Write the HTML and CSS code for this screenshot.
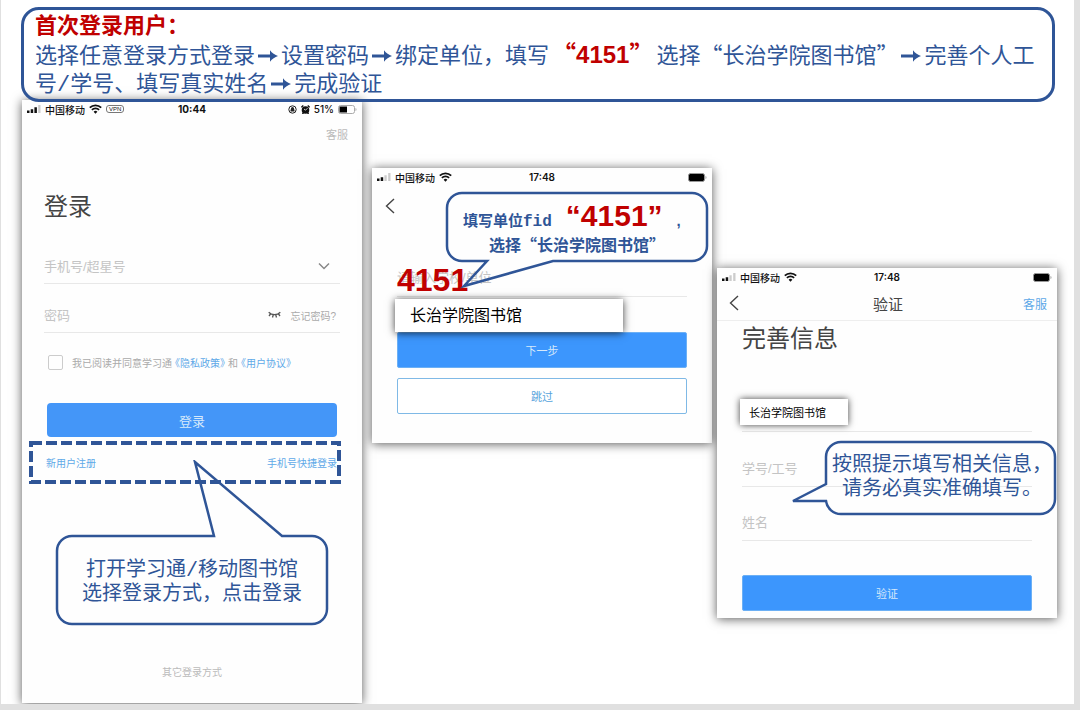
FILE: index.html
```html
<!DOCTYPE html>
<html lang="zh-CN">
<head>
<meta charset="utf-8">
<title>首次登录用户</title>
<link rel="stylesheet" href="styles.css">
</head>
<body>
<svg class="defs" aria-hidden="true">
  <symbol id="wifi" viewBox="0 0 13 10"><path d="M.8 3.6a8.2 8.2 0 0 1 11.4 0M2.9 5.9a5.1 5.1 0 0 1 7.2 0" fill="none" stroke="currentColor" stroke-width="1.8"/><path d="M4.6 7.7a2.8 2.8 0 0 1 3.8 0L6.5 9.8z" fill="currentColor"/></symbol>
  <symbol id="arrow" viewBox="0 0 20 14"><path d="M0 5.500h13v3H0z" fill="currentColor"/><path d="M12 1.200C14 4 17 6 20 7c-3 1-6 3-8 5.800z" fill="currentColor"/></symbol>
  <symbol id="back" viewBox="0 0 10 16"><path d="M9 1 1.500 8 9 15" fill="none" stroke="currentColor" stroke-width="1.400"/></symbol>
</svg>
<main class="slide">
  <header class="banner">
    <h1 class="banner-title">首次登录用户：</h1>
    <p class="banner-text">选择任意登录方式登录<svg class="arrow"><use href="#arrow"/></svg>设置密码<svg class="arrow"><use href="#arrow"/></svg>绑定单位，填写<strong class="code"><span class="quote">“</span>4151<span class="quote">”</span></strong>选择<span class="quote">“长治学院图书馆”</span><svg class="arrow"><use href="#arrow"/></svg>完善个人工<br>号<span class="slash">/</span>学号、填写真实姓名<svg class="arrow"><use href="#arrow"/></svg>完成验证</p>
  </header>

  <div class="phones">
    <section class="phone phone-login">
      <div class="status status-bold">
        <div class="status-left">
          <svg class="signal" viewBox="0 0 14 8"><path d="M0 5.500h2.500V8H0zM3.700 4.200h2.500V8H3.700zM7.400 2.200h2.500V8H7.400z" fill="#111"/><path d="M11.200 0h2.300v8h-2.300z" fill="#ccc"/></svg>
          <span>中国移动</span>
          <svg class="wifi"><use href="#wifi"/></svg>
          <span class="vpn">VPN</span>
        </div>
        <time>10:44</time>
        <div class="status-right">
          <svg class="glyph" viewBox="0 0 9 9"><circle cx="4.500" cy="4.500" r="3.700" fill="none" stroke="#222"/><path d="M3 5V3.500a1.500 1.500 0 0 1 3 0V5M2.500 4.600h4v2h-4z" fill="#222"/></svg>
          <svg class="glyph" viewBox="0 0 9 9"><circle cx="4.500" cy="5" r="3.800" fill="#111"/><path d="M.3 2.300 2.300.5M8.700 2.300 6.700.5M1.500 9l1-1.500M7.500 9l-1-1.500" stroke="#111" stroke-width="1.400"/><path d="M4.500 5.200 6.500 3.200M3 4l1.500 1.200" stroke="#fff" stroke-width=".8"/></svg>
          <span>51%</span>
          <svg class="battery" viewBox="0 0 19 9"><rect x=".5" y=".5" width="16" height="8" rx="2" fill="none" stroke="#aaa"/><rect x="1.500" y="1.500" width="7.500" height="6" fill="#000"/><path d="M17.500 3c1.300.5 1.300 2.500 0 3z" fill="#aaa"/></svg>
        </div>
      </div>
      <div class="body">
        <a class="service" href="#">客服</a>
        <h2 class="heading login-heading">登录</h2>
        <div class="field field-account">
          <input class="input" type="text" placeholder="手机号/超星号" aria-label="手机号/超星号">
          <svg class="chevron" viewBox="0 0 12 8"><path d="m1 1.500 5 5 5-5" fill="none" stroke="#888" stroke-width="1.500"/></svg>
        </div>
        <div class="field field-password">
          <input class="input" type="password" placeholder="密码" aria-label="密码">
          <svg class="eye" viewBox="0 0 13 8"><path d="M.7 1.300c3 3.200 8.600 3.200 11.600 0M2.500 3 1 5M5.200 4 4.500 6.500M7.800 4l.7 2.500M10.500 3 12 5" fill="none" stroke="#555" stroke-width="1.300"/></svg>
          <a class="forgot" href="#">忘记密码?</a>
        </div>
        <div class="agree">
          <input class="check" type="checkbox" id="agree">
          <label for="agree">我已阅读并同意学习通<a href="#">《隐私政策》</a>和<a href="#">《用户协议》</a></label>
        </div>
        <button class="button login-button" type="button">登录</button>
        <nav class="links">
          <svg class="dashes" aria-hidden="true"><rect x="2" y="2"/></svg>
          <a href="#">新用户注册</a>
          <a href="#">手机号快捷登录</a>
        </nav>
        <p class="other">其它登录方式</p>
      </div>
      <aside class="callout callout-login">
        <svg class="bubble" viewBox="0 0 276 166"><path d="M18 76H160L141 2 228 76H258a15 15 0 0 1 15 15V149a15 15 0 0 1-15 15H18A15 15 0 0 1 3 149V91A15 15 0 0 1 18 76z"/></svg>
        <p>打开学习通<span class="slash">/</span>移动图书馆<br>选择登录方式，点击登录</p>
      </aside>
    </section>

    <section class="phone phone-unit">
      <div class="status">
        <div class="status-left">
          <svg class="signal" viewBox="0 0 14 8"><path d="M0 5.500h2.500V8H0zM3.700 4.200h2.500V8H3.700z" fill="#111"/><path d="M7.400 2.200h2.300V8H7.400zM11.200 0h2.300v8h-2.300z" fill="#ccc"/></svg>
          <span>中国移动</span>
          <svg class="wifi"><use href="#wifi"/></svg>
        </div>
        <time>17:48</time>
        <svg class="battery" viewBox="0 0 19 9"><rect x=".5" y=".5" width="16" height="8" rx="2" fill="#000" stroke="#999"/><path d="M17.500 3c1.300.5 1.300 2.500 0 3z" fill="#999"/></svg>
      </div>
      <div class="unit-nav">
        <button class="back" type="button" aria-label="返回"><svg viewBox="0 0 10 16"><use href="#back"/></svg></button>
      </div>
      <div class="body">
        <div class="field field-unit">
          <input class="input" type="text" placeholder="请输入学校/单位" aria-label="学校/单位">
        </div>
        <button class="button next-button" type="button">下一步</button>
        <button class="button outline" type="button">跳过</button>
      </div>
      <div class="suggestion">长治学院图书馆</div>
      <div class="typed">4151</div>
      <aside class="callout callout-unit">
        <svg class="bubble" viewBox="0 0 266 100"><path d="M43 71H18A15 15 0 0 1 3 56V18A15 15 0 0 1 18 3H248a15 15 0 0 1 15 15V56a15 15 0 0 1-15 15H109L20 96z"/></svg>
        <p class="line"><span>填写单位<span class="mono">fid</span></span><strong>“4151”</strong><span>,</span></p>
        <p>选择<span class="quote">“长治学院图书馆”</span></p>
      </aside>
    </section>

    <section class="phone phone-verify">
      <div class="status">
        <div class="status-left">
          <svg class="signal" viewBox="0 0 14 8"><path d="M0 5.500h2.500V8H0zM3.700 4.200h2.500V8H3.700z" fill="#111"/><path d="M7.400 2.200h2.300V8H7.400zM11.200 0h2.300v8h-2.300z" fill="#ccc"/></svg>
          <span>中国移动</span>
          <svg class="wifi"><use href="#wifi"/></svg>
        </div>
        <time>17:48</time>
        <svg class="battery" viewBox="0 0 19 9"><rect x=".5" y=".5" width="16" height="8" rx="2" fill="#000" stroke="#999"/><path d="M17.500 3c1.300.5 1.300 2.500 0 3z" fill="#999"/></svg>
      </div>
      <div class="verify-nav">
        <button class="back" type="button" aria-label="返回"><svg viewBox="0 0 10 16"><use href="#back"/></svg></button>
        <span class="nav-title">验证</span>
        <a href="#">客服</a>
      </div>
      <div class="body">
        <h2 class="heading">完善信息</h2>
        <div class="field field-school"><input class="school" type="text" value="长治学院图书馆" aria-label="学校"></div>
        <div class="field field-number"><input class="input" type="text" placeholder="学号/工号" aria-label="学号/工号"></div>
        <div class="field field-name"><input class="input" type="text" placeholder="姓名" aria-label="姓名"></div>
        <button class="button verify-button" type="button">验证</button>
      </div>
      <aside class="callout callout-verify">
        <svg class="bubble" viewBox="0 0 270 78"><path d="M37 45V18A15 15 0 0 1 52 3H251a15 15 0 0 1 15 15V60a15 15 0 0 1-15 15H52A15 15 0 0 1 37 62L4 62z"/></svg>
        <p>按照提示填写相关信息，<br>请务必真实准确填写。</p>
      </aside>
    </section>
  </div>
</main>
</body>
</html>
```
FILE: styles.css
```css
* { box-sizing: border-box; margin: 0; }

body {
  background: #e0e0e0;
  padding: 0 6px 7px 1px;
  font-family: "Liberation Sans", "Noto Sans CJK SC", sans-serif;
  color: #444;
}

a { color: #5fa9e8; text-decoration: none; }
input, button { font-family: inherit; }
svg { flex: none; }
.defs { position: absolute; width: 0; height: 0; }

.slide {
  background: #fff;
  padding: 7px 17px 1px 21px;
  overflow: hidden;
}

.banner {
  position: relative;
  z-index: 2;
  margin: 0 2px -2px -1px;
  padding: 1px 10px 1px 11px;
  border: 3px solid #2f5597;
  border-radius: 18px;
  color: #2f5597;
}
.banner-title { font-size: 22px; line-height: 30px; color: #c00000; }
.banner-text { font-size: 22px; line-height: 28px; white-space: nowrap; }
.arrow { width: 20px; height: 14px; margin: 0 3px; }
.code { margin: 0 3px; font-size: 24px; line-height: 24px; color: #c00000; }
.quote { font-family: "Noto Sans CJK SC", sans-serif; line-height: 1; }
.slash { font-family: "Liberation Mono", monospace; line-height: 1; }

.phones { display: flex; align-items: flex-start; }
.phone {
  position: relative;
  flex: 1;
  background: #fefefe;
  box-shadow: 0 1px 10px rgba(0, 0, 0, .65);
}
.phone-unit { margin: 68px 0 0 10px; padding-bottom: 29px; }
.phone-verify { margin: 168px 0 0 5px; padding-bottom: 7px; }
.phone-login { padding-bottom: 22px; }

.status {
  display: grid;
  grid-template-columns: 1fr auto 1fr;
  align-items: center;
  height: 18px;
  padding: 0 5px;
  font-size: 10px;
  font-weight: 500;
  color: #111;
}
.status time { font-family: Inter, sans-serif; font-size: 10px; font-weight: 600; }
.status-left, .status-right { display: flex; align-items: center; gap: 4px; }
.status-bold time { font-weight: 700; }
.status-right { justify-content: flex-end; font-family: Inter, sans-serif; font-weight: 500; }
.signal { width: 14px; height: 8px; }
.wifi { width: 13px; height: 10px; }
.glyph { width: 9px; height: 9px; }
.battery { width: 19px; height: 9px; justify-self: end; }
.vpn {
  padding: 0 2px;
  border: 1px solid #777;
  border-radius: 3px;
  font-size: 6px;
  line-height: 6px;
  font-weight: 400;
}

.body { display: flex; flex-direction: column; padding: 0 25px; }
.phone-login .body { padding: 0 22px; }
.service { align-self: flex-end; margin: 9px -8px 0 0; font-size: 11px; line-height: 16px; color: #bbb; }
.heading { font-size: 24px; line-height: 34px; font-weight: 400; }
.login-heading { margin-top: 47px; }

.field { display: flex; align-items: center; border-bottom: 1px solid #e8e8e8; }
.input {
  flex: 1;
  min-width: 0;
  height: 20px;
  padding: 0;
  border: 0;
  background: none;
  font-size: 13px;
}
.input::placeholder { color: #c4c4c4; }
.field-account { margin-top: 32px; padding: 0 10px 7px 0; }
.field-password { margin-top: 21px; padding: 0 4px 7px 0; }
.field-unit { margin-top: 41px; padding-bottom: 9px; }
.field-school { margin-top: 43px; padding-bottom: 6px; }
.field-number { margin-top: 26px; padding-bottom: 8px; }
.field-name { margin-top: 25px; padding-bottom: 8px; }
.chevron { width: 12px; height: 8px; }
.eye { width: 13px; height: 8px; margin-right: 9px; }
.forgot { font-size: 10px; color: #aaa; }

.agree { display: flex; align-items: center; gap: 9px; height: 16px; margin: 21px 0 0 4px; font-size: 10px; color: #aaa; white-space: nowrap; }
.agree a { margin: 0 -2px; }
.check { appearance: none; width: 15px; height: 15px; border: 1px solid #ccc; border-radius: 2px; }

.button {
  height: 36px;
  padding: 0;
  border: 1px solid #6cb0f5;
  border-radius: 2px;
  background: #3c96fd;
  font-size: 11px;
  color: #d6e9fb;
}
.login-button { height: 34px; margin: 33px 3px 0; border: 0; border-radius: 4px; background: #4496f8; font-size: 13px; }
.next-button { margin-top: 35px; }
.outline { margin-top: 10px; border-color: #7fb9e6; background: #fff; color: #56a3dc; }
.verify-button { margin-top: 34px; }

.links {
  position: relative;
  display: flex;
  align-items: center;
  justify-content: space-between;
  height: 43px;
  margin: 4px -1px 0 -15px;
  padding: 0 4px 0 17px;
  font-size: 10px;
}
.dashes { position: absolute; inset: 0; width: 100%; height: 100%; }
.dashes rect {
  width: calc(100% - 4px);
  height: calc(100% - 4px);
  fill: none;
  stroke: #2f5597;
  stroke-width: 4px;
  stroke-dasharray: 11 4;
}
.other { margin-top: 181px; font-size: 10px; line-height: 16px; text-align: center; color: #bbb; }

.unit-nav { display: flex; align-items: center; height: 40px; padding: 0 13px; }
.verify-nav {
  display: grid;
  grid-template-columns: 1fr auto 1fr;
  align-items: center;
  height: 35px;
  padding: 0 10px 0 12px;
  border-bottom: 1px solid #eee;
  font-size: 12px;
}
.verify-nav a { justify-self: end; }
.nav-title { font-size: 15px; }
.verify-nav + .body { padding-top: 1px; }
.back { display: flex; width: 10px; padding: 0; border: 0; background: none; color: #444; }
.back svg { width: 10px; height: 16px; }

.suggestion {
  position: absolute;
  top: 131px;
  left: 23px;
  width: 228px;
  padding-left: 15px;
  background: #fff;
  box-shadow: 0 1px 8px rgba(0, 0, 0, .75);
  font-size: 16px;
  line-height: 33px;
  color: #000;
}
.typed { position: absolute; top: 94px; left: 25px; font-size: 32px; line-height: 36px; font-weight: 700; color: #c00000; }
.school {
  width: 108px;
  height: 26px;
  margin-left: -2px;
  padding: 0 9px;
  border: 0;
  background: #fff;
  box-shadow: 0 0 7px rgba(0, 0, 0, .75);
  font-size: 11px;
  color: #000;
}

.callout { position: absolute; font-size: 20px; line-height: 24px; color: #2f5597; text-align: center; white-space: nowrap; }
.callout p { position: relative; }
.bubble { position: absolute; inset: 0; width: 100%; height: 100%; }
.bubble path { fill: none; stroke: #2f5597; stroke-width: 2.5px; }
.callout-login { top: 360px; left: 32px; width: 276px; height: 166px; padding-top: 97px; }
.callout-unit { top: 22px; left: 72px; width: 266px; height: 100px; padding-top: 8px; font-size: 16px; font-weight: 700; }
.callout-unit .line { display: flex; align-items: baseline; gap: 14px; height: 36px; padding-left: 19px; line-height: 36px; font-size: 15px; }
.callout-unit strong { font-size: 30px; color: #c00000; }
.mono { font-family: "Liberation Mono", monospace; font-size: 16px; line-height: 1; }
.callout-verify { top: 171px; left: 72px; width: 270px; height: 78px; padding: 13px 0 0 36px; }
```
